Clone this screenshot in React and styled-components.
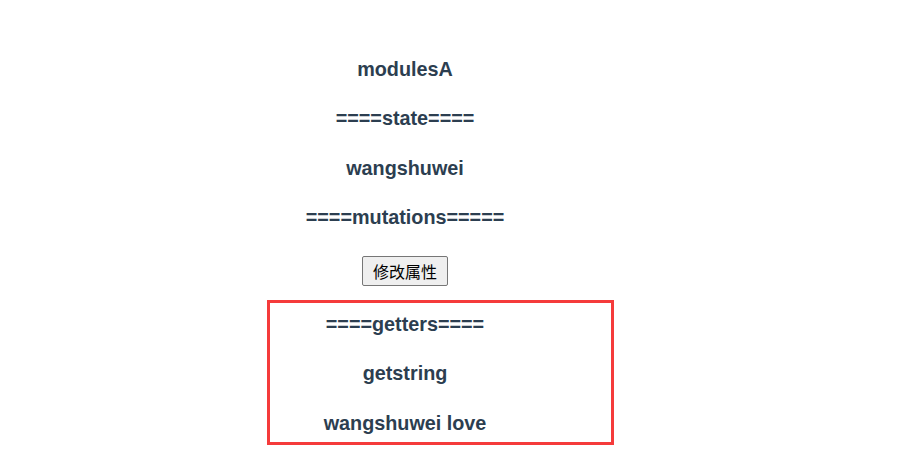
import React from "react";
import styled, { createGlobalStyle } from "styled-components";

const GlobalStyle = createGlobalStyle`
  html, body { margin: 0; padding: 0; background: #ffffff; }
  body { font-family: "Liberation Sans", Arial, sans-serif; }
`;

const Page = styled.div`
  width: 810px;
  padding: 57.5px 0 24px;
  display: flex;
  flex-direction: column;
  align-items: center;
  gap: 26.67px;
  color: #2c3e50;
  text-align: center;
  font-family: "Liberation Sans", Arial, sans-serif;
  -webkit-font-smoothing: antialiased;
`;

const Heading = styled.h3`
  margin: 0;
  font-size: 19.8px;
  line-height: 23px;
  font-weight: bold;
`;

const Button = styled.button`
  height: 30px;
  padding: 0 10px;
  font-family: "Noto Sans CJK SC", "Liberation Sans", sans-serif;
  font-size: 16px;
  line-height: 20px;
  color: #000;
  background: #efefef;
  border: 1px solid #767676;
  border-radius: 2px;
`;

const Section = styled.section`
  position: relative;
  align-self: stretch;
  display: flex;
  flex-direction: column;
  align-items: center;
  gap: 26.67px;
`;

const Highlight = styled.div`
  position: absolute;
  left: 267px;
  top: -12.5px;
  width: 347px;
  height: 145px;
  box-sizing: border-box;
  border: 3px solid #f53b3b;
  pointer-events: none;
`;

export default function App() {
  return (
    <>
      <GlobalStyle />
      <Page>
        <Heading>modulesA</Heading>
        <Heading>====state====</Heading>
        <Heading>wangshuwei</Heading>
        <Heading>====mutations=====</Heading>
        <Button>修改属性</Button>
        <Section>
          <Highlight />
          <Heading>====getters====</Heading>
          <Heading>getstring</Heading>
          <Heading>wangshuwei love</Heading>
        </Section>
      </Page>
    </>
  );
}
